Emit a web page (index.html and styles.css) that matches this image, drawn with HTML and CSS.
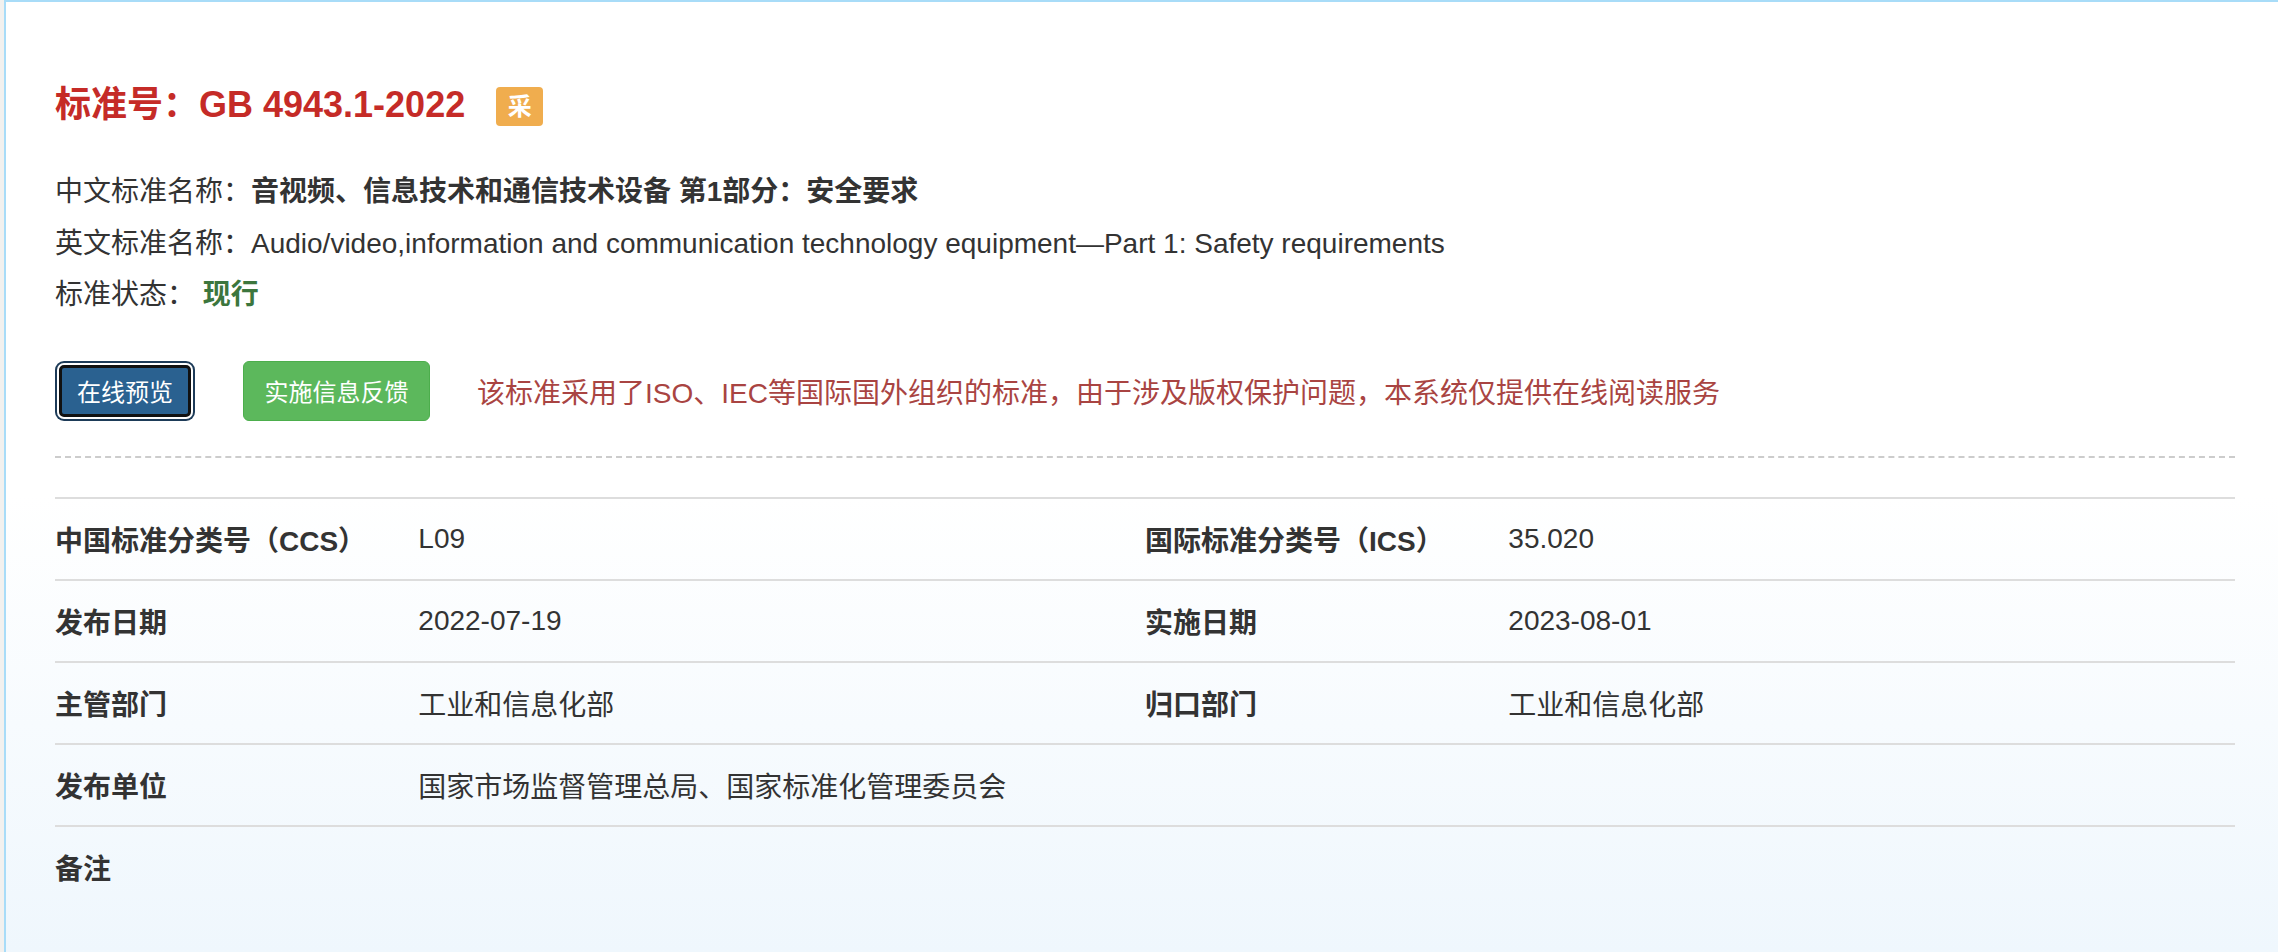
FILE: index.html
```html
<!DOCTYPE html>
<html lang="zh-cn">
<head>
  <meta charset="UTF-8">
  <meta name="viewport" content="width=device-width, initial-scale=1.0">
  <title>GB 4943.1-2022</title>
  <link rel="stylesheet" href="styles.css">
</head>
<body>

<div class="detail">
  <h3 class="std-title">
    <span>标准号：GB 4943.1-2022</span>
    <span class="badge">采</span>
  </h3>

  <div class="info">
    <p>中文标准名称：<b>音视频、信息技术和通信技术设备 第1部分：安全要求</b></p>
    <p>英文标准名称：Audio/video,information and communication technology equipment—Part 1: Safety requirements</p>
    <p>标准状态： <span class="status">现行</span></p>
  </div>

  <div class="actions">
    <button class="btn btn-primary">在线预览</button>
    <button class="btn btn-success">实施信息反馈</button>
    <span class="note">该标准采用了ISO、IEC等国际国外组织的标准，由于涉及版权保护问题，本系统仅提供在线阅读服务</span>
  </div>

  <hr class="dash">

  <div class="props">
    <div class="row">
      <div class="label">中国标准分类号（CCS）</div>
      <div class="value">L09</div>
      <div class="label">国际标准分类号（ICS）</div>
      <div class="value">35.020</div>
    </div>
    <div class="row">
      <div class="label">发布日期</div>
      <div class="value">2022-07-19</div>
      <div class="label">实施日期</div>
      <div class="value">2023-08-01</div>
    </div>
    <div class="row">
      <div class="label">主管部门</div>
      <div class="value">工业和信息化部</div>
      <div class="label">归口部门</div>
      <div class="value">工业和信息化部</div>
    </div>
    <div class="row">
      <div class="label">发布单位</div>
      <div class="value wide">国家市场监督管理总局、国家标准化管理委员会</div>
    </div>
    <div class="row">
      <div class="label">备注</div>
      <div class="value wide"></div>
    </div>
  </div>
</div>

</body>
</html>
```

FILE: styles.css
```css
/* page */
body {
  margin: 0;
  background: #f2f1ef;
  font-family: "Liberation Sans", "Noto Sans CJK SC", sans-serif;
  color: #333;
}
.detail {
  margin-left: 4px;
  height: 100vh;
  box-sizing: border-box;
  padding: 82px 43px 0 49px;
  border-top: 2px solid #a8dcf8;
  border-left: 2px solid #a8dcf8;
  background: linear-gradient(to bottom, #fff 0, #fff 52%, #eff7fd 100%);
}

/* title */
.std-title {
  display: flex;
  align-items: center;
  gap: 31px;
  margin: 0;
  font-size: 36px;
  line-height: 40px;
  font-weight: bold;
  color: #c52b27;
}
.badge {
  display: inline-block;
  width: 47px;
  height: 39px;
  margin-top: 3px;
  line-height: 39px;
  text-align: center;
  font-size: 24px;
  color: #fff;
  background: #f0ad4e;
  border-radius: 4px;
}

/* basic info */
.info {
  margin-top: 40px;
}
.info p {
  margin: 0;
  font-size: 28px;
  line-height: 51.5px;
}
.info b {
  font-weight: bold;
}
.status {
  color: #3c763d;
  font-weight: bold;
}

/* buttons */
.actions {
  display: flex;
  align-items: center;
  margin-top: 40px;
  height: 60px;
}
.btn {
  height: 60px;
  padding: 0 20px;
  font-family: inherit;
  font-size: 24px;
  color: #fff;
  border-radius: 6px;
  cursor: pointer;
}
.btn-primary {
  width: 132px;
  height: 52px;
  margin: 4px;
  padding: 0;
  background: #2a6190;
  border: 3px solid #111;
  border-radius: 5px;
  box-shadow: 0 0 0 2px #fff, 0 0 0 4px #1d3b58;
}
.btn-success {
  width: 187px;
  margin-left: 48px;
  background: #5cb85c;
  border: 1px solid #4cae4c;
}
.note {
  margin-left: 47px;
  font-size: 28px;
  color: #a94442;
}

.dash {
  margin: 35px 0 0;
  border: none;
  border-top: 2px dashed #ccc;
}

/* property table */
.props {
  margin-top: 39px;
}
.row {
  display: grid;
  grid-template-columns: 1fr 2fr 1fr 2fr;
  align-items: center;
  height: 82px;
  box-sizing: border-box;
  border-top: 2px solid #ddd;
  font-size: 28px;
}
.label {
  font-weight: bold;
}
.value.wide {
  grid-column: span 3;
}
```
